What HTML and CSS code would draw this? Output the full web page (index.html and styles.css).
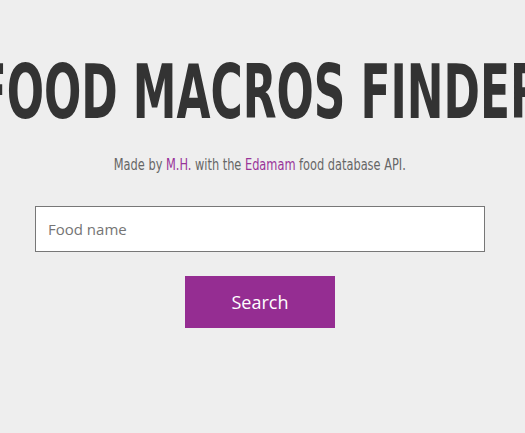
FILE: index.html
```html
<!DOCTYPE html>
<html>
<head>
<meta charset="utf-8">
<link rel="stylesheet" href="styles.css">
</head>
<body>
<main class="page">
  <h1 class="title">FOOD MACROS FINDER</h1>
  <p class="credit">Made by <a href="#">M.H.</a> with the <a href="#">Edamam</a> food database API.</p>
  <form class="search">
    <input class="food-input" type="text" placeholder="Food name">
    <button class="search-btn" type="button">Search</button>
  </form>
</main>
</body>
</html>
```
FILE: styles.css
```css
html, body {
  margin: 0;
  padding: 0;
  background: #eeeeee;
  overflow: hidden;
}
.page {
  display: flex;
  flex-direction: column;
  align-items: center;
  width: 520px;
}
.title {
  margin: 52px 0 0;
  font-family: "DejaVu Sans Condensed", "DejaVu Sans", sans-serif;
  font-weight: bold;
  font-size: 75px;
  line-height: 80px;
  color: #333333;
  white-space: nowrap;
  transform: scaleX(0.65);
}
.credit {
  margin: 24px 0 0;
  font-family: "DejaVu Sans Condensed", "DejaVu Sans", sans-serif;
  font-size: 16px;
  line-height: 18px;
  color: #666666;
  white-space: nowrap;
  transform: scaleX(0.79);
}
.credit a {
  color: #993399;
  text-decoration: none;
}
.search {
  display: flex;
  flex-direction: column;
  align-items: center;
  margin-top: 32px;
}
.food-input {
  box-sizing: border-box;
  width: 450px;
  height: 46px;
  border: 1px solid #777777;
  background: #ffffff;
  padding: 0 12px;
  font-family: "Open Sans", sans-serif;
  font-size: 15px;
  color: #333;
  outline: none;
}
.food-input::placeholder {
  color: #757575;
}
.search-btn {
  margin-top: 24px;
  width: 150px;
  height: 52px;
  border: none;
  background: #952d92;
  color: #ffffff;
  font-family: "Open Sans", sans-serif;
  font-size: 18px;
}
```
